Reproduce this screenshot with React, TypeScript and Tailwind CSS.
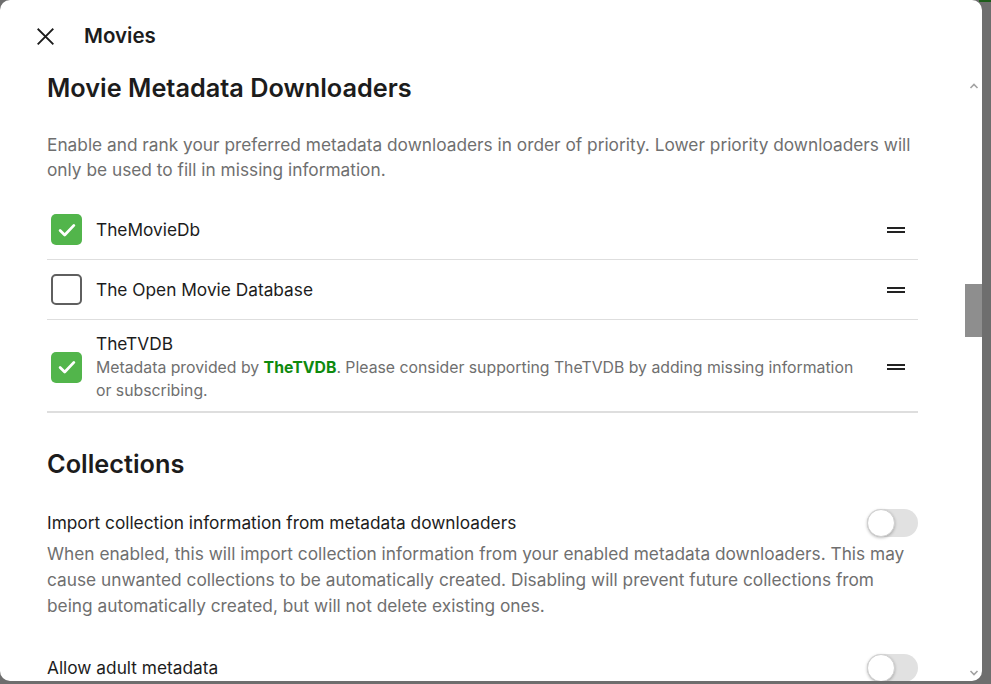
import React from "react";

const font = { fontFamily: "Inter, 'Noto Sans', sans-serif" };

function Check({ on }: { on: boolean }) {
  if (on)
    return (
      <div className="w-[31px] h-[31px] rounded-[5px] bg-[#52b54b] flex items-center justify-center shrink-0">
        <svg width="22" height="22" viewBox="0 0 24 24" fill="none" stroke="white" strokeWidth="3" strokeLinecap="round" strokeLinejoin="round">
          <path d="M4.5 12.5l5 5L19.5 7" />
        </svg>
      </div>
    );
  return <div className="w-[31px] h-[31px] rounded-[5px] border-2 border-[#5f5f5f] bg-white shrink-0" />;
}

function Handle() {
  return (
    <div className="w-[18px] flex flex-col gap-[2px] shrink-0">
      <div className="h-[2px] bg-[#222]" />
      <div className="h-[2px] bg-[#222]" />
    </div>
  );
}

function Toggle() {
  return (
    <div className="relative w-[51px] h-[28px] rounded-full bg-[#e1e1e1] shrink-0">
      <div className="absolute left-0 top-0 w-[28px] h-[28px] rounded-full bg-white border border-[#d0d0d0] shadow-[0_1px_3px_rgba(0,0,0,0.25)]" />
    </div>
  );
}

export default function App() {
  return (
    <div className="relative w-[991px] h-[684px] bg-[#6e6e6e] overflow-hidden" style={font}>
      <div className="absolute right-0 top-0 w-[12px] h-[2px] bg-[#1d5c1a]" />
      <div className="w-[982px] h-[681px] bg-white rounded-[10px] flex flex-col overflow-hidden text-[#1c1c1c]">
        <div className="h-[72px] shrink-0 flex items-center pl-[36px]">
          <svg width="19" height="19" viewBox="0 0 24 24" fill="none" stroke="#1c1c1c" strokeWidth="2.4" strokeLinecap="square">
            <path d="M3 3L21 21M21 3L3 21" />
          </svg>
          <span className="ml-[29px] text-[20.5px] font-semibold">Movies</span>
        </div>
        <div className="flex-1 flex min-h-0">
          <div className="w-[918px] pl-[47px] shrink-0">
            <h2 className="text-[25.3px] leading-[32px] font-semibold">Movie Metadata Downloaders</h2>
            <p className="mt-[28px] text-[17.3px] leading-[25px] text-[#6f6f6f]">
              Enable and rank your preferred metadata downloaders in order of priority. Lower priority downloaders will only be used to fill in missing information.
            </p>
            <div className="mt-[18px] border-b-2 border-[#dedede]">
              <div className="h-[60px] flex items-center border-b border-[#dedede] pl-[4px] pr-[13px]">
                <Check on />
                <span className="ml-[14px] text-[17.3px] flex-1">TheMovieDb</span>
                <Handle />
              </div>
              <div className="h-[60px] flex items-center border-b border-[#dedede] pl-[4px] pr-[13px]">
                <Check on={false} />
                <span className="ml-[14px] text-[17.3px] flex-1">The Open Movie Database</span>
                <Handle />
              </div>
              <div className="flex items-center pl-[4px] pr-[13px] pt-[12px] pb-[9px]">
                <Check on />
                <div className="ml-[14px] flex-1 pr-[24px]">
                  <div className="text-[17.3px] leading-[24px]">TheTVDB</div>
                  <div className="text-[15.8px] leading-[23px] text-[#6f6f6f]">
                    Metadata provided by <span className="font-bold text-[#0e8a0e]">TheTVDB</span>. Please consider supporting TheTVDB by adding missing information or subscribing.
                  </div>
                </div>
                <Handle />
              </div>
            </div>
            <h2 className="mt-[35px] text-[25.3px] leading-[32px] font-semibold">Collections</h2>
            <div className="mt-[29px]">
              <div className="flex items-center justify-between">
                <span className="text-[17.3px] leading-[26px]">Import collection information from metadata downloaders</span>
                <Toggle />
              </div>
              <p className="mt-[4px] text-[17.3px] leading-[26px] text-[#6f6f6f]">
                When enabled, this will import collection information from your enabled metadata downloaders. This may cause unwanted collections to be automatically created. Disabling will prevent future collections from being automatically created, but will not delete existing ones.
              </p>
            </div>
            <div className="mt-[35px] flex items-center justify-between">
              <span className="text-[17.3px] leading-[26px]">Allow adult metadata</span>
              <Toggle />
            </div>
          </div>
          <div className="flex-1" />
          <div className="w-[17px] shrink-0 flex flex-col items-center">
            <svg className="mt-[10px]" width="10" height="8" viewBox="0 0 10 8" fill="none" stroke="#a3a3a3" strokeWidth="1.6">
              <path d="M1.5 6L5 2.5L8.5 6" />
            </svg>
            <div className="mt-[194px] w-full h-[53px] bg-[#8e8e8e]" />
            <div className="flex-1" />
            <svg className="mb-[4px]" width="10" height="8" viewBox="0 0 10 8" fill="none" stroke="#a3a3a3" strokeWidth="1.6">
              <path d="M1.5 2L5 5.5L8.5 2" />
            </svg>
          </div>
        </div>
      </div>
    </div>
  );
}
